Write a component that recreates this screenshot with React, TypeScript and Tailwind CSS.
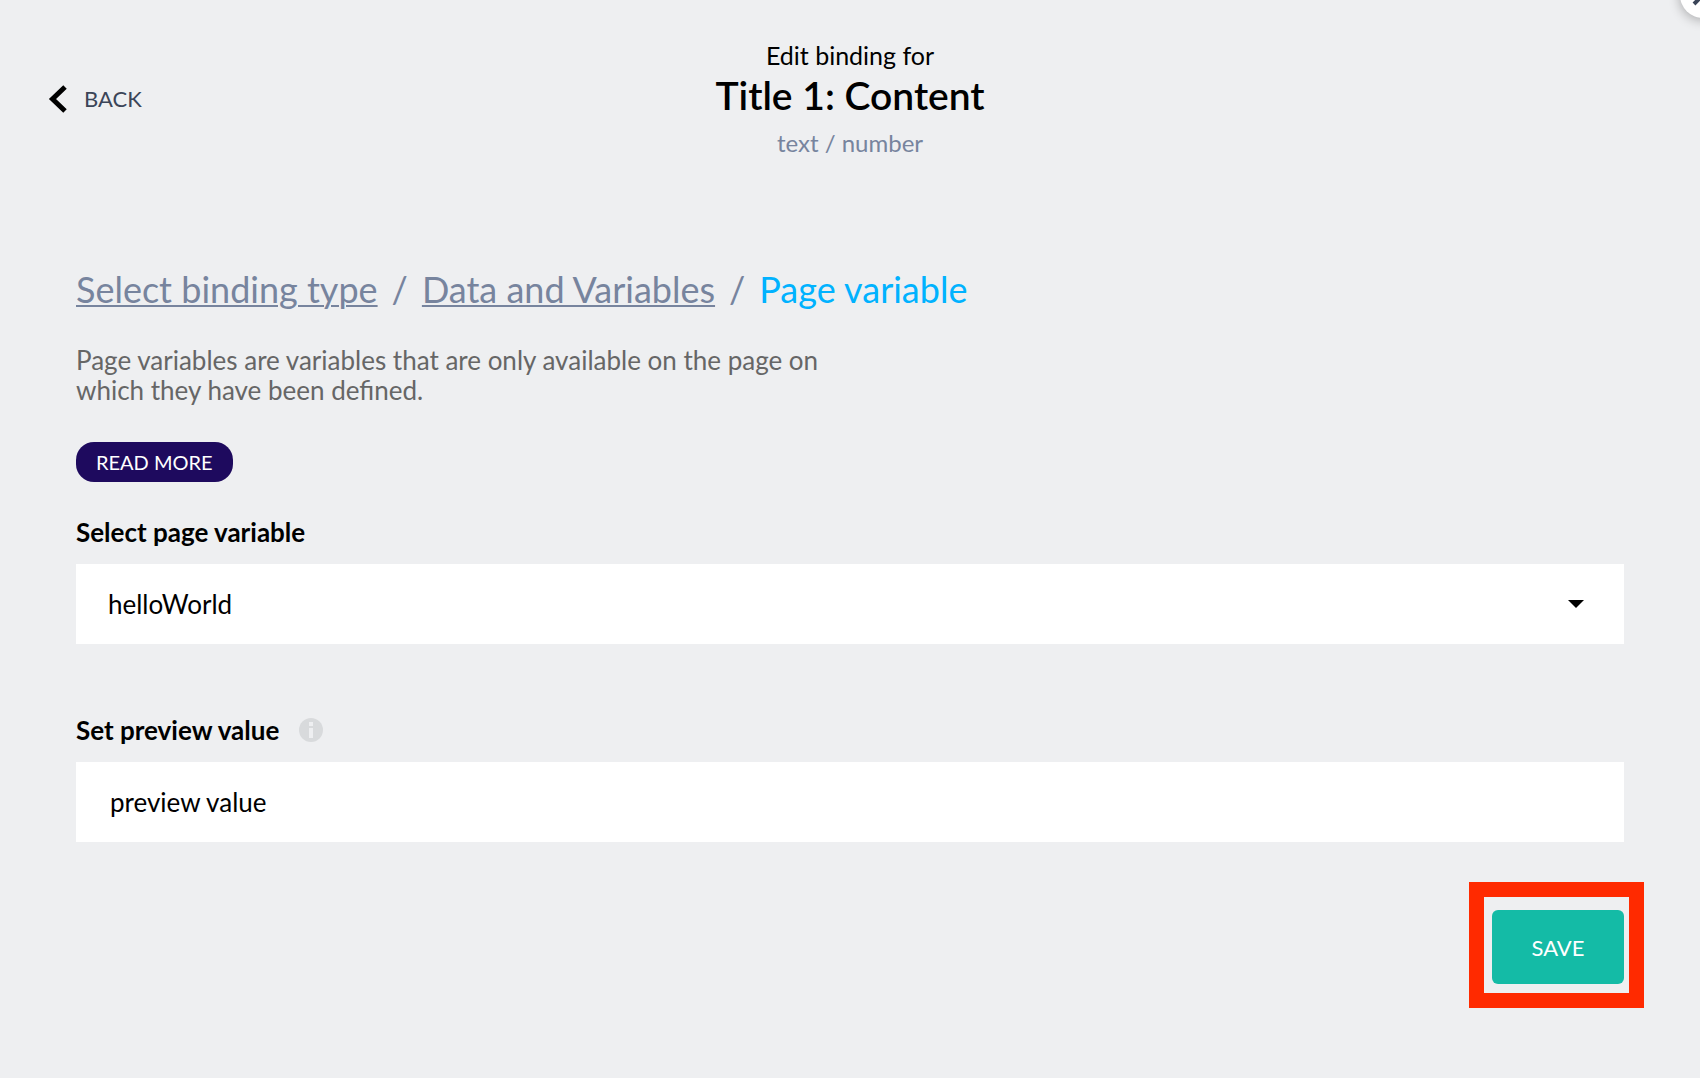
import React from 'react'

type FieldProps = {
    id: string
    label: string
    hint?: React.ReactNode
    children: React.ReactNode
}

const variables = ['helloWorld']

function CloseButton() {
    return (
        <button
            type="button"
            aria-label="Close"
            className="absolute -top-7 -right-[26px] flex items-center justify-center w-[46px] h-[46px] bg-white rounded-full shadow-[0_2px_12px_rgba(0,0,0,0.3)]"
        >
            <svg width="22" height="22" viewBox="0 0 22 22" className="shrink-0" fill="none" stroke="#3b4558" strokeWidth="4">
                <path d="M2 2L20 20M20 2L2 20" />
            </svg>
        </button>
    )
}

function Header() {
    return (
        <header className="grid grid-cols-[1fr_auto_1fr] items-center pt-[39px] px-12">
            <button type="button" className="flex items-center justify-self-start cursor-pointer">
                <svg width="20" height="28" viewBox="0 0 20 28" fill="none" stroke="#000" strokeWidth="5">
                    <path d="M17 2L4.500 14L17 26" />
                </svg>
                <span className="ml-4 text-[22px] leading-7 text-[#3b4558]">BACK</span>
            </button>
            <div className="flex flex-col items-center text-center">
                <span className="text-[25px] leading-8 text-black">Edit binding for</span>
                <h1 className="text-[39px] leading-[48px] font-semibold text-black">Title 1: Content</h1>
                <span className="mt-2 text-2xl leading-8 text-[#77849e]">text / number</span>
            </div>
        </header>
    )
}

function Breadcrumbs() {
    return (
        <nav aria-label="Breadcrumb" className="flex flex-wrap items-center gap-x-[14px] text-4xl leading-10 text-[#77849e]">
            <a href="#binding-type" className="underline decoration-2 underline-offset-2">Select binding type</a>
            <span>/</span>
            <a href="#data" className="underline decoration-2 underline-offset-2">Data and Variables</a>
            <span>/</span>
            <span aria-current="page" className="text-[#00b2ff]">Page variable</span>
        </nav>
    )
}

function InfoIcon() {
    return (
        <svg width="24" height="24" viewBox="0 0 24 24" className="ml-5">
            <circle cx="12" cy="12" r="12" fill="#d8dadc" />
            <path d="M10 4h4v4h-4zM10 10h4v10h-4z" fill="#eeeff1" />
        </svg>
    )
}

function Field({ id, label, hint, children }: FieldProps) {
    return (
        <div>
            <div className="flex items-center h-8 mb-4">
                <label htmlFor={id} className="text-[26px] leading-8 font-bold text-black">{label}</label>
                {hint}
            </div>
            {children}
        </div>
    )
}

function App() {
    return (
        <div className="relative min-h-screen overflow-hidden bg-[#eeeff1] font-['Lato',sans-serif]">
            <CloseButton />
            <Header />
            <main className="px-[76px] pt-[110px] pb-20">
                <Breadcrumbs />
                <p className="mt-9 max-w-[780px] text-[26px] leading-[30px] text-[#666]">
                    Page variables are variables that are only available on the page on which they have been defined.
                </p>
                <a href="#read-more" className="flex items-center w-fit h-10 mt-[37px] px-5 rounded-[18px] bg-[#1e0a5e] text-xl text-white">
                    READ MORE
                </a>
                <div className="mt-[34px]">
                    <Field id="page-variable" label="Select page variable">
                        <div className="relative">
                            <select id="page-variable" className="appearance-none w-full h-20 px-8 bg-white text-[26px] text-black">
                                {variables.map(name => <option key={name}>{name}</option>)}
                            </select>
                            <svg width="16" height="8" viewBox="0 0 16 8" className="absolute right-10 top-9 pointer-events-none">
                                <path d="M0 0h16L8 8z" fill="#000" />
                            </svg>
                        </div>
                    </Field>
                </div>
                <div className="mt-[70px]">
                    <Field id="preview-value" label="Set preview value" hint={<InfoIcon />}>
                        <input id="preview-value" type="text" defaultValue="preview value" className="block w-full h-20 px-[34px] bg-white text-[26px] text-black" />
                    </Field>
                </div>
                <div className="flex justify-end mt-[68px]">
                    <div className="relative">
                        <button type="button" className="flex items-center justify-center w-[132px] h-[74px] rounded-md bg-[#14bba6] text-[22px] text-white cursor-pointer">
                            SAVE
                        </button>
                        <div className="absolute -top-7 -right-5 -bottom-6 -left-[23px] border-[15px] border-[#ff2a00] pointer-events-none" />
                    </div>
                </div>
            </main>
        </div>
    )
}

export default App
